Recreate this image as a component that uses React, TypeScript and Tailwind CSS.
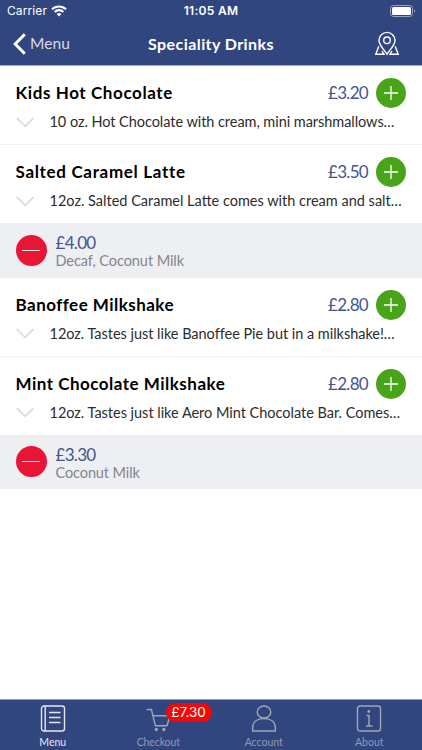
interface Drink {
    id: number
    name: string
    nameClass: string
    price: string
    description: string
    descriptionClass: string
    order?: { price: string; extras: string; extrasClass: string }
}

const drinks: Drink[] = [
    {
        id: 1,
        name: "Kids Hot Chocolate",
        nameClass: "tracking-[0.6px]",
        price: "£3.20",
        description: "10 oz. Hot Chocolate with cream, mini marshmallows…",
        descriptionClass: "tracking-[-0.05px]",
    },
    {
        id: 2,
        name: "Salted Caramel Latte",
        nameClass: "tracking-[0.68px]",
        price: "£3.50",
        description: "12oz. Salted Caramel Latte comes with cream and salt…",
        descriptionClass: "tracking-[0px]",
        order: { price: "£4.00", extras: "Decaf, Coconut Milk", extrasClass: "tracking-[-0.07px]" },
    },
    {
        id: 3,
        name: "Banoffee Milkshake",
        nameClass: "tracking-[0.47px]",
        price: "£2.80",
        description: "12oz. Tastes just like Banoffee Pie but in a milkshake!…",
        descriptionClass: "tracking-[-0.03px]",
    },
    {
        id: 4,
        name: "Mint Chocolate Milkshake",
        nameClass: "tracking-[0.5px]",
        price: "£2.80",
        description: "12oz. Tastes just like Aero Mint Chocolate Bar. Comes…",
        descriptionClass: "tracking-[-0.02px]",
        order: { price: "£3.30", extras: "Coconut Milk", extrasClass: "tracking-[-0.1px]" },
    },
]

const StatusBar = () => (
    <div className="grid h-[22px] grid-cols-3 items-center px-[6px] font-['Inter',sans-serif] text-white">
        <div className="flex items-center gap-[4px] pl-px">
            <span className="text-[12px] tracking-[0.1px]">Carrier</span>
            <svg width="16" height="12" viewBox="0 0 16 12" fill="none" stroke="white" strokeWidth="2.1">
                <path d="M1 4.3a10 10 0 0 1 14 0" />
                <path d="M3.6 7a6.2 6.2 0 0 1 8.8 0" />
                <path d="M8 11.6 5.6 9.1a3.4 3.4 0 0 1 4.8 0z" fill="white" stroke="none" />
            </svg>
        </div>
        <span className="text-center text-[12px] font-semibold tracking-[0.3px]">11:05 AM</span>
        <svg className="justify-self-end" width="26" height="12" viewBox="0 0 26 12" fill="none">
            <rect x="0.5" y="0.5" width="22" height="11" rx="3" stroke="#99a3c0" />
            <rect x="2" y="2" width="19" height="8" rx="1.5" fill="white" />
            <path d="M24 4.2v3.6c1.4-.6 1.4-3 0-3.6z" fill="#99a3c0" />
        </svg>
    </div>
)

const NavBar = () => (
    <div className="grid h-[43px] grid-cols-[1fr_auto_1fr] items-center text-white">
        <div className="flex items-center gap-[4px] pl-[13px]">
            <svg width="13" height="22" viewBox="0 0 13 22" fill="none" stroke="white" strokeWidth="3">
                <path d="M11.8 1.2 2.2 11l9.6 9.8" />
            </svg>
            <span className="text-[15.5px] tracking-[0.05px] text-[#d6dae6]">Menu</span>
        </div>
        <h1 className="text-center text-[16px] leading-[20px] font-bold tracking-[0.42px] whitespace-nowrap">Speciality Drinks</h1>
        <svg className="mr-[22px] justify-self-end" width="26" height="26" viewBox="0 0 26 26" fill="none" stroke="white" strokeWidth="1.4">
            <path d="M13 23.2C10.5 19 5 14.2 5 9.4a8 8 0 0 1 16 0c0 4.8-5.5 9.6-8 13.800z" />
            <circle cx="13" cy="9.3" r="3.3" />
            <path d="M4.8 15.2 1.8 23.300H10L8 20M21.2 15.2l3 8.100H16L18 20" />
        </svg>
    </div>
)

const DrinkRow = ({ drink }: { drink: Drink }) => (
    <div className="h-[78px] pt-3 pr-4 pl-[15.5px]">
        <div className="flex h-[30px] items-center">
            <h2 className={`flex-1 text-[17px] leading-[30px] font-bold whitespace-nowrap text-black ${drink.nameClass}`}>{drink.name}</h2>
            <span className="mr-[8px] text-[17px] leading-[30px] tracking-[-0.7px] text-[#43548f]">{drink.price}</span>
            <button className="flex size-[30px] items-center justify-center rounded-full bg-[#4aa41a]">
                <svg width="16" height="16" viewBox="0 0 16 16" stroke="white" strokeWidth="1.3">
                    <path d="M1 8h14M8 1v14" />
                </svg>
            </button>
        </div>
        <div className="flex h-[28px] items-center">
            <svg className="mr-[15px] shrink-0" width="19" height="11" viewBox="0 0 19 11" fill="none" stroke="#dcdcdc" strokeWidth="1.8">
                <path d="M.8 1 9.2 9.300 17.600 1" />
            </svg>
            <p className={`text-[14.5px] whitespace-nowrap text-[#2c2c2c] ${drink.descriptionClass}`}>{drink.description}</p>
        </div>
    </div>
)

const OrderRow = ({ order }: { order: NonNullable<Drink["order"]> }) => (
    <div className="flex h-[54.5px] items-center bg-[#eeeff2] pl-[15.5px]">
        <button className="mr-[9px] flex size-[31px] items-center justify-center rounded-full bg-[#e91537]">
            <span className="h-px w-[18px] bg-white/90" />
        </button>
        <div className="pt-[3px]">
            <p className="text-[17px] leading-[18px] tracking-[-0.7px] text-[#43548f]">{order.price}</p>
            <p className={`text-[14.5px] leading-[17px] text-[#858589] ${order.extrasClass}`}>{order.extras}</p>
        </div>
    </div>
)

const TabBar = () => (
    <nav className="grid h-[51px] grid-cols-4 border-t border-[#8f99ba] bg-[#31467f] text-center text-[10.5px] leading-[13px] text-[#8e99b8]">
        <div className="flex flex-col items-center pt-[5px] text-[#e4e7ef]">
            <svg width="26" height="27" viewBox="0 0 26 27" fill="none" stroke="currentColor" strokeWidth="1.4">
                <rect x="1.5" y="1" width="23" height="25" rx="2.5" />
                <path d="M5.2 1v25M9 7.5h11.500M9 12.500h11.500M9 17.500h11.500" />
            </svg>
            <span className="mt-[4px]">Menu</span>
        </div>
        <div className="relative flex flex-col items-center pt-[5px]">
            <svg width="26" height="27" viewBox="0 0 26 27" fill="none" stroke="#a0a7b8" strokeWidth="1.4">
                <path d="M1.7 4.500h4.700l4 16.300h12M7.900 10.700H25l-3 10.100" />
                <circle cx="11.3" cy="24.500" r="1" fill="#a0a7b8" />
                <circle cx="18.800" cy="24.500" r="1" fill="#a0a7b8" />
            </svg>
            <span className="mt-[4px] tracking-[-0.1px]">Checkout</span>
            <span className="absolute top-[3px] left-[60px] h-[19px] w-[46px] rounded-full bg-[#f50707] font-['Inter',sans-serif] text-[13.5px] leading-[19px] text-white">£7.30</span>
        </div>
        <div className="flex flex-col items-center pt-[5px]">
            <svg width="26" height="27" viewBox="0 0 26 27" fill="none" stroke="#a0a7b8" strokeWidth="1.4">
                <ellipse cx="13" cy="7" rx="6.8" ry="6" />
                <path d="M1.700 26v-3.500C1.700 17 6 13.500 13 13.500S24.300 17 24.300 22.500V26z" />
            </svg>
            <span className="mt-[4px]">Account</span>
        </div>
        <div className="flex flex-col items-center pt-[5px]">
            <svg width="26" height="27" viewBox="0 0 26 27" fill="none" stroke="#a0a7b8" strokeWidth="1.4">
                <rect x="1.5" y="1" width="23" height="25" rx="2.5" />
                <path d="M10.500 10.500H13V21M10 21h6.500" />
                <circle cx="12.800" cy="6.500" r=".7" fill="#a0a7b8" />
            </svg>
            <span className="mt-[4px]">About</span>
        </div>
    </nav>
)

export default function App() {
    return (
        <div className="flex h-[750px] w-[422px] flex-col overflow-hidden bg-white font-['Lato',sans-serif]">
            <header className="h-[66px] border-b border-[#a3abc8] bg-[#31467f]">
                <StatusBar />
                <NavBar />
            </header>
            <main className="flex-1">
                {drinks.map((drink, index) => (
                    <div key={drink.id}>
                        <DrinkRow drink={drink} />
                        {drink.order && <OrderRow order={drink.order} />}
                        {index % 2 === 0 && <div className="h-px bg-[#f1f1f2]" />}
                    </div>
                ))}
            </main>
            <TabBar />
        </div>
    )
}
